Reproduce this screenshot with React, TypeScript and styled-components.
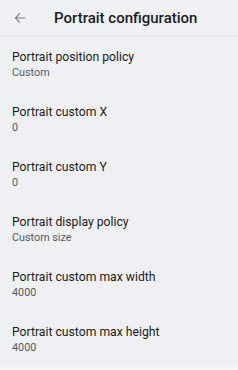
import styled, { createGlobalStyle } from "styled-components";

const GlobalStyle = createGlobalStyle`
  html, body {
    margin: 0;
    padding: 0;
    background: #f5f6f8;
  }
  body {
    font-family: Roboto, "Liberation Sans", sans-serif;
  }
`;

const Screen = styled.div`
  width: 238px;
  background: #eef0f4;
`;

const Header = styled.div`
  height: 36px;
  display: flex;
  align-items: center;
  background: #eff1f5;
  border-bottom: 1px solid #e6e8ec;
  box-sizing: border-box;
`;

const BackButton = styled.button`
  width: 42px;
  height: 36px;
  border: none;
  background: transparent;
  padding: 0 0 0 12px;
  display: flex;
  align-items: center;
  color: #74777c;
`;

const Title = styled.h1`
  margin: 0 0 0 12px;
  font-size: 15px;
  font-weight: 500;
  color: #1b1c1f;
`;

const List = styled.div`
  display: flex;
  flex-direction: column;
`;

const Item = styled.div`
  height: 55px;
  box-sizing: border-box;
  padding: 13px 12px 0;
  display: flex;
  flex-direction: column;
`;

const ItemTitle = styled.div`
  font-size: 12.2px;
  line-height: 17px;
  color: #1c1d20;
`;

const ItemValue = styled.div`
  font-size: 10.8px;
  line-height: 14px;
  color: #595c61;
`;

const settings = [
  { title: "Portrait position policy", value: "Custom" },
  { title: "Portrait custom X", value: "0" },
  { title: "Portrait custom Y", value: "0" },
  { title: "Portrait display policy", value: "Custom size" },
  { title: "Portrait custom max width", value: "4000" },
  { title: "Portrait custom max height", value: "4000" },
];

const BackArrow = () => (
  <svg width="16" height="16" viewBox="0 0 24 24">
    <path
      d="M20 11.25H6.9l5.6-5.6L11.45 4.6 4 12l7.45 7.4 1.05-1.05-5.6-5.6H20z"
      fill="currentColor"
    />
  </svg>
);

export default function App() {
  return (
    <Screen>
      <GlobalStyle />
      <Header>
        <BackButton>
          <BackArrow />
        </BackButton>
        <Title>Portrait configuration</Title>
      </Header>
      <List>
        {settings.map((s) => (
          <Item key={s.title}>
            <ItemTitle>{s.title}</ItemTitle>
            <ItemValue>{s.value}</ItemValue>
          </Item>
        ))}
      </List>
    </Screen>
  );
}
